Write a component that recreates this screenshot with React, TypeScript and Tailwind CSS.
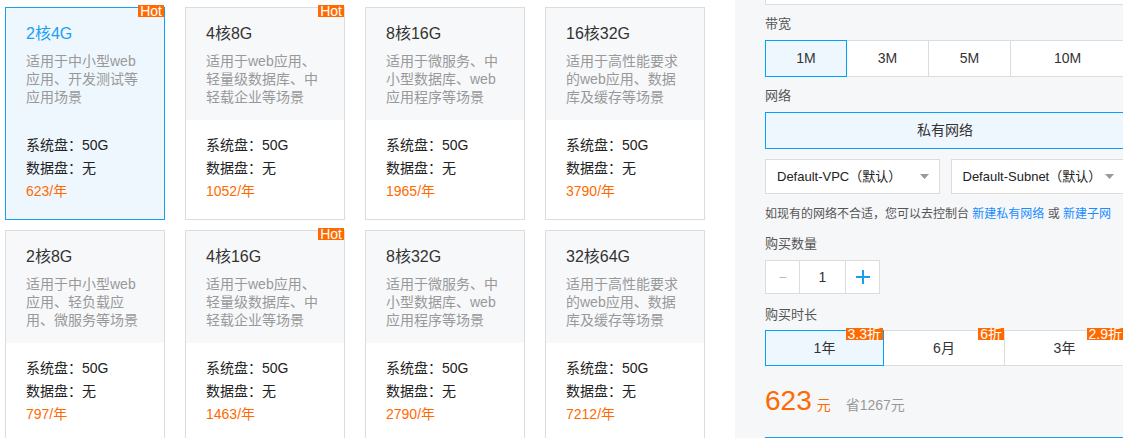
import React from 'react';

type Plan = { title: string; desc: string; price: string; hot?: boolean };

const plans: Plan[] = [
  { title: '2核4G', desc: '适用于中小型web应用、开发测试等应用场景', price: '623/年', hot: true },
  { title: '4核8G', desc: '适用于web应用、轻量级数据库、中轻载企业等场景', price: '1052/年', hot: true },
  { title: '8核16G', desc: '适用于微服务、中小型数据库、web应用程序等场景', price: '1965/年' },
  { title: '16核32G', desc: '适用于高性能要求的web应用、数据库及缓存等场景', price: '3790/年' },
  { title: '2核8G', desc: '适用于中小型web应用、轻负载应用、微服务等场景', price: '797/年' },
  { title: '4核16G', desc: '适用于web应用、轻量级数据库、中轻载企业等场景', price: '1463/年', hot: true },
  { title: '8核32G', desc: '适用于微服务、中小型数据库、web应用程序等场景', price: '2790/年' },
  { title: '32核64G', desc: '适用于高性能要求的web应用、数据库及缓存等场景', price: '7212/年' },
];

const Badge = ({ text }: { text: string }) => (
  <span className="absolute right-0 top-[-3px] z-20 bg-[#ff6a00] px-[2px] text-[14px] leading-[12px] text-white">
    {text}
  </span>
);

const PlanCard = ({ plan, active }: { plan: Plan; active: boolean }) => (
  <div
    className={`relative w-[160px] h-[213px] border ${
      active ? 'border-[#1a9ff0] bg-[#eff7fe]' : 'border-[#dcdcdc] bg-white'
    }`}
  >
    {plan.hot && <Badge text="Hot" />}
    <div className={`px-[20px] pt-[15px] h-[112px] ${active ? '' : 'bg-[#f7f8fa]'}`}>
      <div className={`text-[16px] leading-[22px] ${active ? 'text-[#1a9ff0]' : 'text-[#333]'}`}>{plan.title}</div>
      <div className="mt-[7px] text-[14px] leading-[18px] text-[#999]">{plan.desc}</div>
    </div>
    <div className="px-[20px] pt-[14px] text-[14px] leading-[23px]">
      <div className="text-[#222]">系统盘：50G</div>
      <div className="text-[#222]">数据盘：无</div>
      <div className="text-[#ff6a00]">{plan.price}</div>
    </div>
  </div>
);

const Caret = () => (
  <svg width="9" height="5" viewBox="0 0 9 5" className="shrink-0">
    <path d="M0 0h9L4.5 5z" fill="#999" />
  </svg>
);

const Label = ({ children, mt }: { children: React.ReactNode; mt: string }) => (
  <div className={`${mt} text-[13px] leading-[18px] text-[#555]`}>{children}</div>
);

export default function App() {
  const bandwidths = ['1M', '3M', '5M', '10M'];
  const durations = [
    { label: '1年', tag: '3.3折' },
    { label: '6月', tag: '6折' },
    { label: '3年', tag: '2.9折' },
  ];

  return (
    <div
      className="flex w-[1123px] h-[438px] overflow-hidden bg-white"
      style={{ fontFamily: '"Liberation Sans", Arial, "Noto Sans CJK SC", sans-serif' }}
    >
      <div className="w-[735px] shrink-0 pl-[5px] pt-[7px]">
        <div className="grid grid-cols-[repeat(4,160px)] gap-x-[20px] gap-y-[10px]">
          {plans.map((p, i) => (
            <PlanCard key={i} plan={p} active={i === 0} />
          ))}
        </div>
      </div>

      <div className="flex-1 bg-[#f6f7f9] pl-[30px]">
        <div className="flex w-[360px] flex-col">
          <div className="h-[5px] border border-t-0 border-[#dcdcdc] bg-white" />

          <Label mt="mt-[10px]">带宽</Label>
          <div className="mt-[7px] flex h-[37px] text-[14px] text-[#333]">
            {bandwidths.map((b, i) => (
              <div
                key={b}
                className={`flex items-center justify-center border ${
                  i === 0 ? 'relative z-10 w-[82px] border-[#00a2ff] bg-[#eff7fe]' : 'border-[#dcdcdc] bg-white -ml-px'
                } ${i === 3 ? 'flex-1' : i > 0 ? 'w-[83px]' : ''}`}
              >
                {b}
              </div>
            ))}
          </div>

          <Label mt="mt-[10px]">网络</Label>
          <div className="mt-[7px] flex h-[37px] items-center justify-center border border-[#00a2ff] bg-[#eff7fe] text-[14px] text-[#333]">
            私有网络
          </div>

          <div className="mt-[10px] flex gap-[11px]">
            {['Default-VPC（默认）', 'Default-Subnet（默认）'].map((t) => (
              <div
                key={t}
                className="flex h-[35px] flex-1 items-center justify-between border border-[#dcdcdc] bg-white pl-[11px] pr-[10px] text-[13px] text-[#222]"
              >
                <span>{t}</span>
                <Caret />
              </div>
            ))}
          </div>

          <div className="mt-[11px] whitespace-nowrap text-[12px] leading-[18px] text-[#555]">
            如现有的网络不合适，您可以去控制台 <span className="text-[#1a8cff]">新建私有网络</span> 或{' '}
            <span className="text-[#1a8cff]">新建子网</span>
          </div>

          <Label mt="mt-[12px]">购买数量</Label>
          <div className="mt-[7px] flex h-[34px] w-[115px] border border-[#dcdcdc] bg-white text-[14px]">
            <div className="flex w-[33px] items-center justify-center text-[#bbb]">−</div>
            <div className="flex w-[47px] items-center justify-center border-x border-[#dcdcdc] text-[#333]">1</div>
            <div className="flex flex-1 items-center justify-center">
              <svg width="16" height="16" viewBox="0 0 16 16">
                <path d="M8 1v14M1 8h14" stroke="#1a9ff0" strokeWidth="2" />
              </svg>
            </div>
          </div>

          <Label mt="mt-[12px]">购买时长</Label>
          <div className="mt-[6px] flex h-[36px] text-[14px] text-[#333]">
            {durations.map((d, i) => (
              <div
                key={d.label}
                className={`relative flex items-center justify-center border ${
                  i === 0 ? 'z-10 w-[119px] border-[#00a2ff] bg-[#eff7fe]' : 'border-[#dcdcdc] bg-white -ml-px'
                } ${i === 1 ? 'w-[122px]' : i === 2 ? 'flex-1' : ''}`}
              >
                <Badge text={d.tag} />
                {d.label}
              </div>
            ))}
          </div>

          <div className="mt-[19px] flex h-[32px] items-baseline">
            <span className="text-[28px] leading-[32px] text-[#ff6a00]">623</span>
            <span className="ml-[5px] text-[14px] text-[#ff6a00]">元</span>
            <span className="ml-[15px] text-[14px] text-[#999]">省1267元</span>
          </div>

          <div className="mt-[20px] h-[10px] border-t border-[#1a9ff0]" />
        </div>
      </div>
    </div>
  );
}
